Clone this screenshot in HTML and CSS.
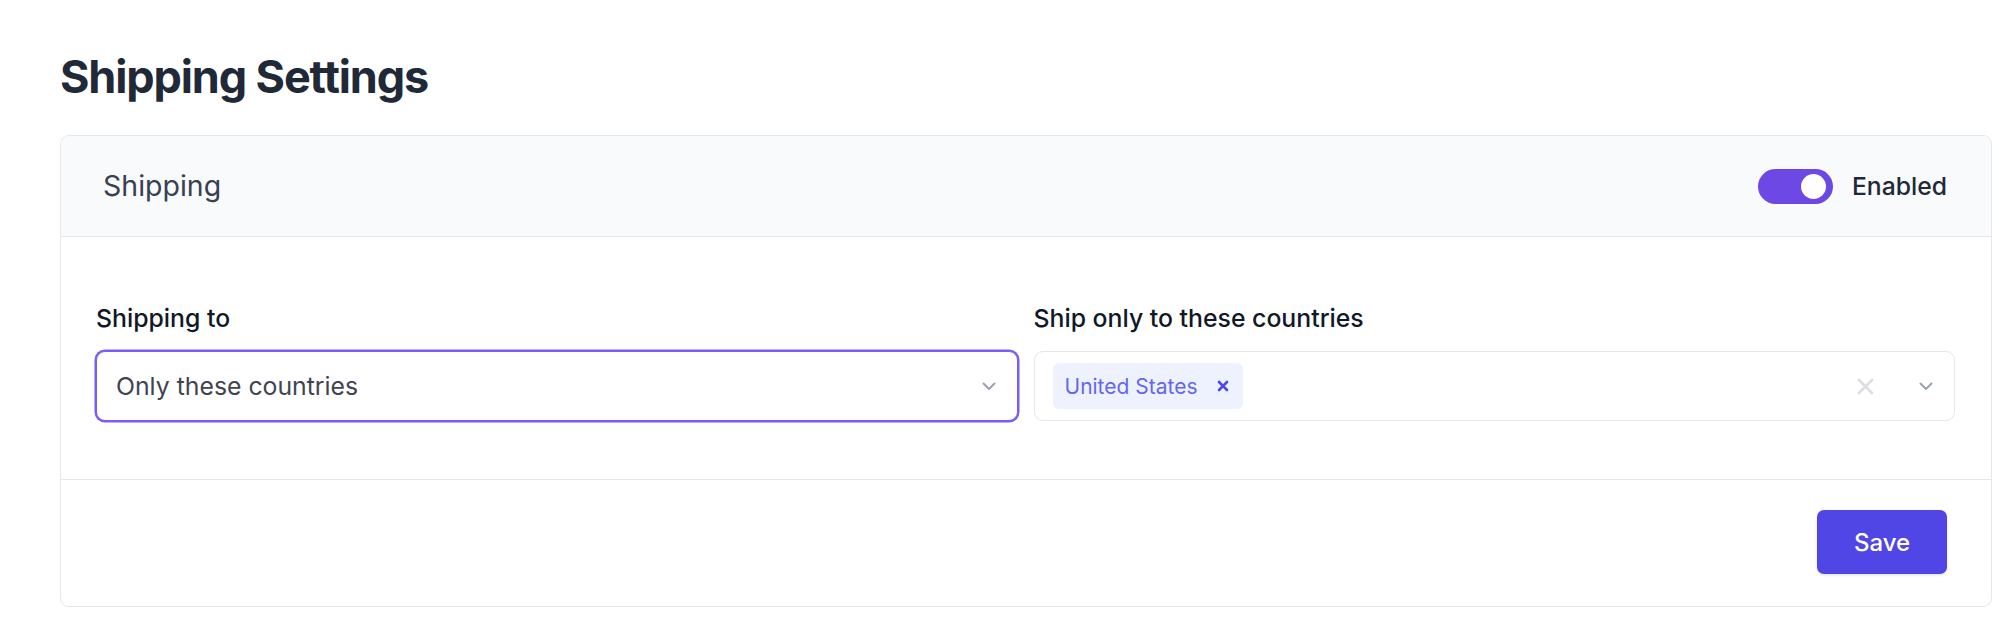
FILE: index.html
```html
<!DOCTYPE html>
<html lang="en">
<head>
    <meta charset="UTF-8">
    <meta name="viewport" content="width=device-width, initial-scale=1.0">
    <title>Shipping Settings</title>
    <link rel="stylesheet" href="styles.css">
</head>
<body>
    <div class="page">
        <h1 class="page-title">Shipping Settings</h1>

        <div class="card">
            <div class="card-header">
                <span class="card-title">Shipping</span>
                <div class="switch-group">
                    <span class="switch on"><span class="knob"></span></span>
                    <span class="switch-label">Enabled</span>
                </div>
            </div>

            <div class="card-body">
                <div class="field">
                    <label class="field-label">Shipping to</label>
                    <div class="select focused">
                        <span class="select-value">Only these countries</span>
                        <svg class="chevron" width="14" height="9" viewBox="0 0 14 9"><path d="M1.5 1.5 7 7l5.5-5.5" fill="none" stroke="currentColor" stroke-width="2" stroke-linecap="round" stroke-linejoin="round"/></svg>
                    </div>
                </div>

                <div class="field">
                    <label class="field-label">Ship only to these countries</label>
                    <div class="select multi">
                        <span class="chip">
                            United States
                            <svg class="chip-x" width="12" height="12" viewBox="0 0 12 12"><path d="M2 2l8 8M10 2 2 10" stroke="currentColor" stroke-width="2.6" stroke-linecap="round"/></svg>
                        </span>
                        <span class="multi-tools">
                            <svg class="clear-x" width="17" height="17" viewBox="0 0 17 17"><path d="M2 2l13 13M15 2 2 15" stroke="currentColor" stroke-width="2.8" stroke-linecap="round"/></svg>
                            <svg class="chevron" width="14" height="9" viewBox="0 0 14 9"><path d="M1.5 1.5 7 7l5.5-5.5" fill="none" stroke="currentColor" stroke-width="2" stroke-linecap="round" stroke-linejoin="round"/></svg>
                        </span>
                    </div>
                </div>
            </div>

            <div class="card-footer">
                <button class="btn-save">Save</button>
            </div>
        </div>
    </div>
</body>
</html>
```

FILE: styles.css
```css
/* Page */
body {
    margin: 0;
    background: #fff;
    font-family: Inter, "Noto Sans", sans-serif;
    color: #1f2937;
}

.page {
    padding: 50px 7px 27px 60px;
}

.page-title {
    margin: 0 0 31px;
    font-size: 45px;
    line-height: 54px;
    font-weight: 700;
    letter-spacing: -0.025em;
    color: #1f2937;
}

/* Card */
.card {
    border: 1px solid #e5e7eb;
    border-radius: 9px;
    overflow: hidden;
    background: #fff;
}

.card-header {
    height: 100px;
    padding: 0 44px 0 42px;
    display: flex;
    align-items: center;
    justify-content: space-between;
    background: #f9fafb;
    border-bottom: 1px solid #e5e7eb;
}

.card-title {
    font-size: 28.5px;
    line-height: 40px;
    color: #374151;
}

/* Toggle */
.switch-group {
    display: flex;
    align-items: center;
    gap: 19px;
}

.switch {
    width: 75px;
    height: 35px;
    border-radius: 18px;
    background: #d1d5db;
    display: flex;
    align-items: center;
    padding: 0 7px;
    box-sizing: border-box;
}

.switch.on {
    background: #6d48e5;
    justify-content: flex-end;
}

.knob {
    width: 25px;
    height: 25px;
    border-radius: 50%;
    background: #fff;
}

.switch-label {
    font-size: 24.7px;
    line-height: 36px;
    font-weight: 500;
    color: #1f2937;
}

/* Body */
.card-body {
    padding: 63px 36px 58px 35px;
    display: grid;
    grid-template-columns: 1fr 1fr;
    gap: 16px;
    border-bottom: 1px solid #e5e7eb;
}

.field-label {
    display: block;
    margin-bottom: 15px;
    font-size: 24.8px;
    line-height: 36px;
    font-weight: 500;
    color: #111827;
}

.select {
    height: 70px;
    box-sizing: border-box;
    border: 1px solid #e5e7eb;
    border-radius: 9px;
    display: flex;
    align-items: center;
    justify-content: space-between;
    padding: 0 21px 0 19px;
    background: #fff;
}

.select.focused {
    border-color: #7c5cf2;
    box-shadow: 0 0 0 1.5px #7c5cf2;
}

.select-value {
    font-size: 24.8px;
    line-height: 36px;
    color: #3f4450;
}

.chevron {
    color: #9ca3af;
    display: block;
}

/* Multi select */
.select.multi {
    padding-left: 18px;
}

.chip {
    height: 46px;
    display: flex;
    align-items: center;
    gap: 19px;
    padding: 0 14px 0 12px;
    border-radius: 6px;
    background: #eef2ff;
    font-size: 21px;
    color: #6366f1;
}

.chip-x {
    color: #4f46e5;
    display: block;
}

.multi-tools {
    display: flex;
    align-items: center;
    gap: 45px;
}

.clear-x {
    color: #dcdee3;
    display: block;
}

/* Footer */
.card-footer {
    padding: 30px 44px 32px;
    display: flex;
    justify-content: flex-end;
}

.btn-save {
    width: 130px;
    height: 64px;
    border: 0;
    border-radius: 7px;
    background: #4f46e5;
    color: #fff;
    font-family: inherit;
    font-size: 24px;
    font-weight: 500;
    box-shadow: 0 1px 3px rgba(0, 0, 0, 0.12);
}
```
